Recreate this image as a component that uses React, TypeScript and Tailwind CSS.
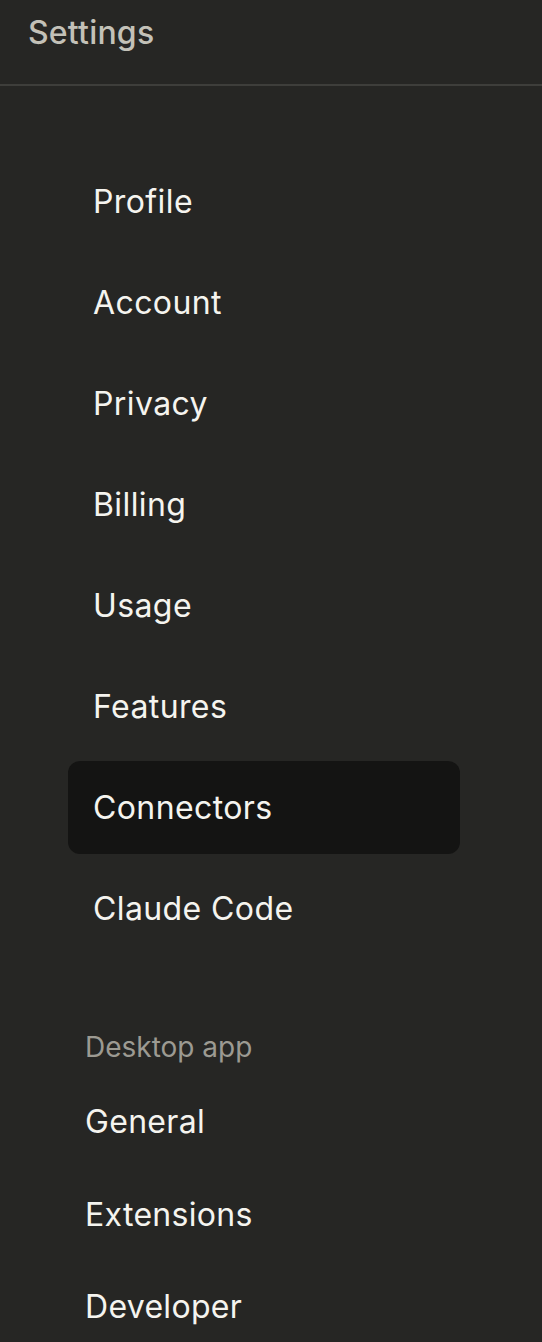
import React from "react";

const main = ["Profile", "Account", "Privacy", "Billing", "Usage", "Features", "Connectors", "Claude Code"];
const desktop = ["General", "Extensions", "Developer"];

export default function App() {
  return (
    <div
      className="w-[542px] h-[1342px] bg-[#262624] overflow-hidden"
      style={{ fontFamily: "Inter, 'Noto Sans', sans-serif" }}
    >
      <div className="h-[86px] border-b-2 border-[#3e3e3b] px-[28px] pt-[14px]">
        <div className="text-[32px] leading-[38px] text-[#c3c1b8] font-medium tracking-[0.2px]">Settings</div>
      </div>
      <div className="pt-[69px] pl-[68px]">
        <div className="flex flex-col gap-2 w-[392px]">
          {main.map((m) => (
            <div
              key={m}
              className={
                "h-[93px] flex items-center pl-[25px] rounded-[12px] text-[32px] tracking-[0.4px] text-[#f5f4ef] " +
                (m === "Connectors" ? "bg-[#141413]" : "")
              }
            >
              {m}
            </div>
          ))}
        </div>
      </div>
      <div className="pl-[85px] pt-[73px]">
        <div className="h-[38px] leading-[38px] text-[28px] text-[#9c9a92]">Desktop app</div>
        <div className="flex flex-col mt-[10px]">
          {desktop.map((m) => (
            <div key={m} className="h-[92.5px] flex items-center text-[32px] tracking-[0.3px] text-[#f5f4ef]">
              {m}
            </div>
          ))}
        </div>
      </div>
    </div>
  );
}
